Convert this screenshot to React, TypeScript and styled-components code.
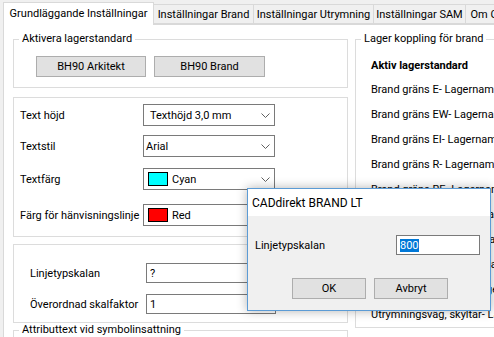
import React from 'react';
import styled, { createGlobalStyle } from 'styled-components';

const Global = createGlobalStyle`
  html, body { margin: 0; padding: 0; background: #f0f0f0; }
  body { font-family: Roboto, "Liberation Sans", sans-serif; font-size: 11px; color: #000; }
  * { box-sizing: border-box; }
`;

const Window = styled.div`
  position: relative;
  width: 494px;
  height: 337px;
  overflow: hidden;
  background: #f0f0f0;
  display: flex;
  flex-direction: column;
`;

const TabStrip = styled.div`
  display: flex;
  align-items: flex-end;
  height: 24px;
  padding-left: 4px;
  flex: none;
  position: relative;
  z-index: 1;
`;

const Tab = styled.div<{ $active?: boolean; $w: number }>`
  width: ${p => p.$w}px;
  height: ${p => (p.$active ? 23 : 20)}px;
  margin-bottom: ${p => (p.$active ? -1 : 0)}px;
  margin-left: -1px;
  background: ${p => (p.$active ? '#fff' : '#f0f0f0')};
  border: 1px solid #d9d9d9;
  border-bottom: ${p => (p.$active ? 'none' : '1px solid #d9d9d9')};
  display: flex;
  align-items: center;
  justify-content: center;
  white-space: nowrap;
  flex: none;
  padding-bottom: ${p => (p.$active ? 1 : 0)}px;
`;

const Page = styled.div`
  flex: 1;
  display: flex;
  align-items: flex-start;
  gap: 7px;
  background: #fff;
  border-top: 1px solid #d9d9d9;
  border-left: 1px solid #d9d9d9;
  margin-left: 3px;
  padding-left: 9px;
  min-height: 0;
`;

const LeftCol = styled.div`
  width: 335px;
  flex: none;
  display: flex;
  flex-direction: column;
`;

const RightCol = styled.div`
  width: 220px;
  flex: none;
`;

const Group = styled.fieldset<{ $mt?: number }>`
  margin: ${p => p.$mt ?? 0}px 0 0 0;
  padding: 0;
  border: 1px solid #dcdcdc;
  min-width: 0;
`;

const Legend = styled.legend`
  margin-left: 5px;
  padding: 0 3px;
  line-height: 14px;
  height: 14px;
  white-space: nowrap;
`;

const ButtonRow = styled.div`
  display: flex;
  gap: 8px;
  padding: 10px 0 10px 22px;
`;

const Button = styled.div<{ $w: number }>`
  width: ${p => p.$w}px;
  height: 21px;
  background: #e1e1e1;
  border: 1px solid #adadad;
  display: flex;
  align-items: center;
  justify-content: center;
`;

const FormBody = styled.div<{ $pt: number; $pb: number; $pl: number }>`
  padding: ${p => p.$pt}px 0 ${p => p.$pb}px ${p => p.$pl}px;
  display: flex;
  flex-direction: column;
`;

const FieldRow = styled.div<{ $mt?: number; $label: number }>`
  display: grid;
  grid-template-columns: ${p => p.$label}px auto;
  align-items: center;
  margin-top: ${p => p.$mt ?? 0}px;
  white-space: nowrap;
`;

const Combo = styled.div<{ $pl?: number }>`
  width: 132px;
  height: 22px;
  background: #fff;
  border: 1px solid #7a7a7a;
  display: flex;
  align-items: center;
  padding-left: ${p => p.$pl ?? 6}px;
  gap: 4px;
`;

const ComboText = styled.span`
  flex: 1;
`;

const Chevron = styled.svg`
  width: 9px;
  height: 5px;
  margin-right: 4px;
  flex: none;
`;

const Swatch = styled.span<{ $c: string }>`
  width: 20px;
  height: 14px;
  background: ${p => p.$c};
  border: 1px solid #000;
  flex: none;
`;

const TextInput = styled.div<{ $w: number }>`
  width: ${p => p.$w}px;
  height: 20px;
  background: #fff;
  border: 1px solid #7a7a7a;
  display: flex;
  align-items: center;
  padding-left: 3px;
`;

const LayerList = styled.div`
  display: flex;
  flex-direction: column;
  padding: 8px 0 0 15px;
  white-space: nowrap;
`;

const LayerItem = styled.div<{ $h?: number; $bold?: boolean }>`
  height: ${p => p.$h ?? 25}px;
  display: flex;
  align-items: center;
  font-weight: ${p => (p.$bold ? 700 : 400)};
`;

const Dialog = styled.div`
  position: absolute;
  left: 247px;
  top: 188px;
  width: 244px;
  height: 123px;
  background: #f0f0f0;
  border: 1px solid #5b9bd5;
  box-shadow: 0 0 10px rgba(0, 0, 0, 0.3);
  z-index: 5;
  display: flex;
  flex-direction: column;
`;

const TitleBar = styled.div`
  height: 27px;
  background: #fff;
  display: flex;
  align-items: center;
  padding-left: 4px;
  flex: none;
  font-size: 12px;
`;

const DialogRow = styled.div`
  display: flex;
  align-items: center;
  justify-content: space-between;
  padding: 19px 10px 0 7px;
`;

const DialogButtons = styled.div`
  display: flex;
  justify-content: center;
  gap: 8px;
  padding-left: 2px;
  margin-top: 23px;
`;

const Selected = styled.span`
  background: #0078d7;
  color: #fff;
`;

const Down = () => (
  <Chevron viewBox="0 0 9 5">
    <polyline points="0.5,0.5 4.5,4.5 8.5,0.5" fill="none" stroke="#606060" strokeWidth="1" />
  </Chevron>
);

const layers = [
  'Brand gräns E- Lagernamn',
  'Brand gräns EW- Lagernamn',
  'Brand gräns EI- Lagernamn',
  'Brand gräns R- Lagernamn',
  'Brand gräns RE- Lagernamn',
  'Brand gräns REI- Lagernamn',
  'Brandcellsgräns- Lagernamn',
  'Brand gräns EI-S- Lagernamn',
  'Brandsektionsgräns- Lagernamn',
  'Utrymningsväg, skyltar- Lagernamn',
];

export default function App() {
  return (
    <>
      <Global />
      <Window>
        <TabStrip>
          <Tab $active $w={151}>Grundläggande Inställningar</Tab>
          <Tab $w={101}>Inställningar Brand</Tab>
          <Tab $w={121}>Inställningar Utrymning</Tab>
          <Tab $w={93}>Inställningar SAM</Tab>
          <Tab $w={80}>Om CADdirekt</Tab>
        </TabStrip>
        <Page>
          <LeftCol>
            <Group $mt={7}>
              <Legend>Aktivera lagerstandard</Legend>
              <ButtonRow>
                <Button $w={110}>BH90 Arkitekt</Button>
                <Button $w={111}>BH90 Brand</Button>
              </ButtonRow>
            </Group>
            <Group $mt={9}>
              <FormBody $pt={6} $pb={10} $pl={6}>
                <FieldRow $label={123}>
                  <span>Text höjd</span>
                  <Combo>
                    <ComboText>Texthöjd 3,0 mm</ComboText>
                    <Down />
                  </Combo>
                </FieldRow>
                <FieldRow $label={123} $mt={9}>
                  <span>Textstil</span>
                  <Combo $pl={2}>
                    <ComboText>Arial</ComboText>
                    <Down />
                  </Combo>
                </FieldRow>
                <FieldRow $label={123} $mt={11}>
                  <span>Textfärg</span>
                  <Combo $pl={4}>
                    <Swatch $c="#00ffff" />
                    <ComboText>Cyan</ComboText>
                    <Down />
                  </Combo>
                </FieldRow>
                <FieldRow $label={123} $mt={14}>
                  <span>Färg för hänvisningslinje</span>
                  <Combo $pl={4}>
                    <Swatch $c="#ff0000" />
                    <ComboText>Red</ComboText>
                    <Down />
                  </Combo>
                </FieldRow>
              </FormBody>
            </Group>
            <Group $mt={7}>
              <FormBody $pt={18} $pb={8} $pl={16}>
                <FieldRow $label={116}>
                  <span>Linjetypskalan</span>
                  <TextInput $w={130}>?</TextInput>
                </FieldRow>
                <FieldRow $label={116} $mt={11}>
                  <span>Överordnad skalfaktor</span>
                  <TextInput $w={130}>1</TextInput>
                </FieldRow>
              </FormBody>
            </Group>
            <Group>
              <Legend>Attributtext vid symbolinsattning</Legend>
              <FormBody $pt={20} $pb={20} $pl={16} />
            </Group>
          </LeftCol>
          <RightCol>
            <Group $mt={7}>
              <Legend>Lager koppling för brand</Legend>
              <LayerList>
                <LayerItem $bold $h={23}>Aktiv lagerstandard</LayerItem>
                {layers.map(l => (
                  <LayerItem key={l}>{l}</LayerItem>
                ))}
              </LayerList>
            </Group>
          </RightCol>
        </Page>
        <Dialog>
          <TitleBar>CADdirekt BRAND LT</TitleBar>
          <DialogRow>
            <span>Linjetypskalan</span>
            <TextInput $w={84}>
              <Selected>800</Selected>
            </TextInput>
          </DialogRow>
          <DialogButtons>
            <Button $w={74}>OK</Button>
            <Button $w={74}>Avbryt</Button>
          </DialogButtons>
        </Dialog>
      </Window>
    </>
  );
}
